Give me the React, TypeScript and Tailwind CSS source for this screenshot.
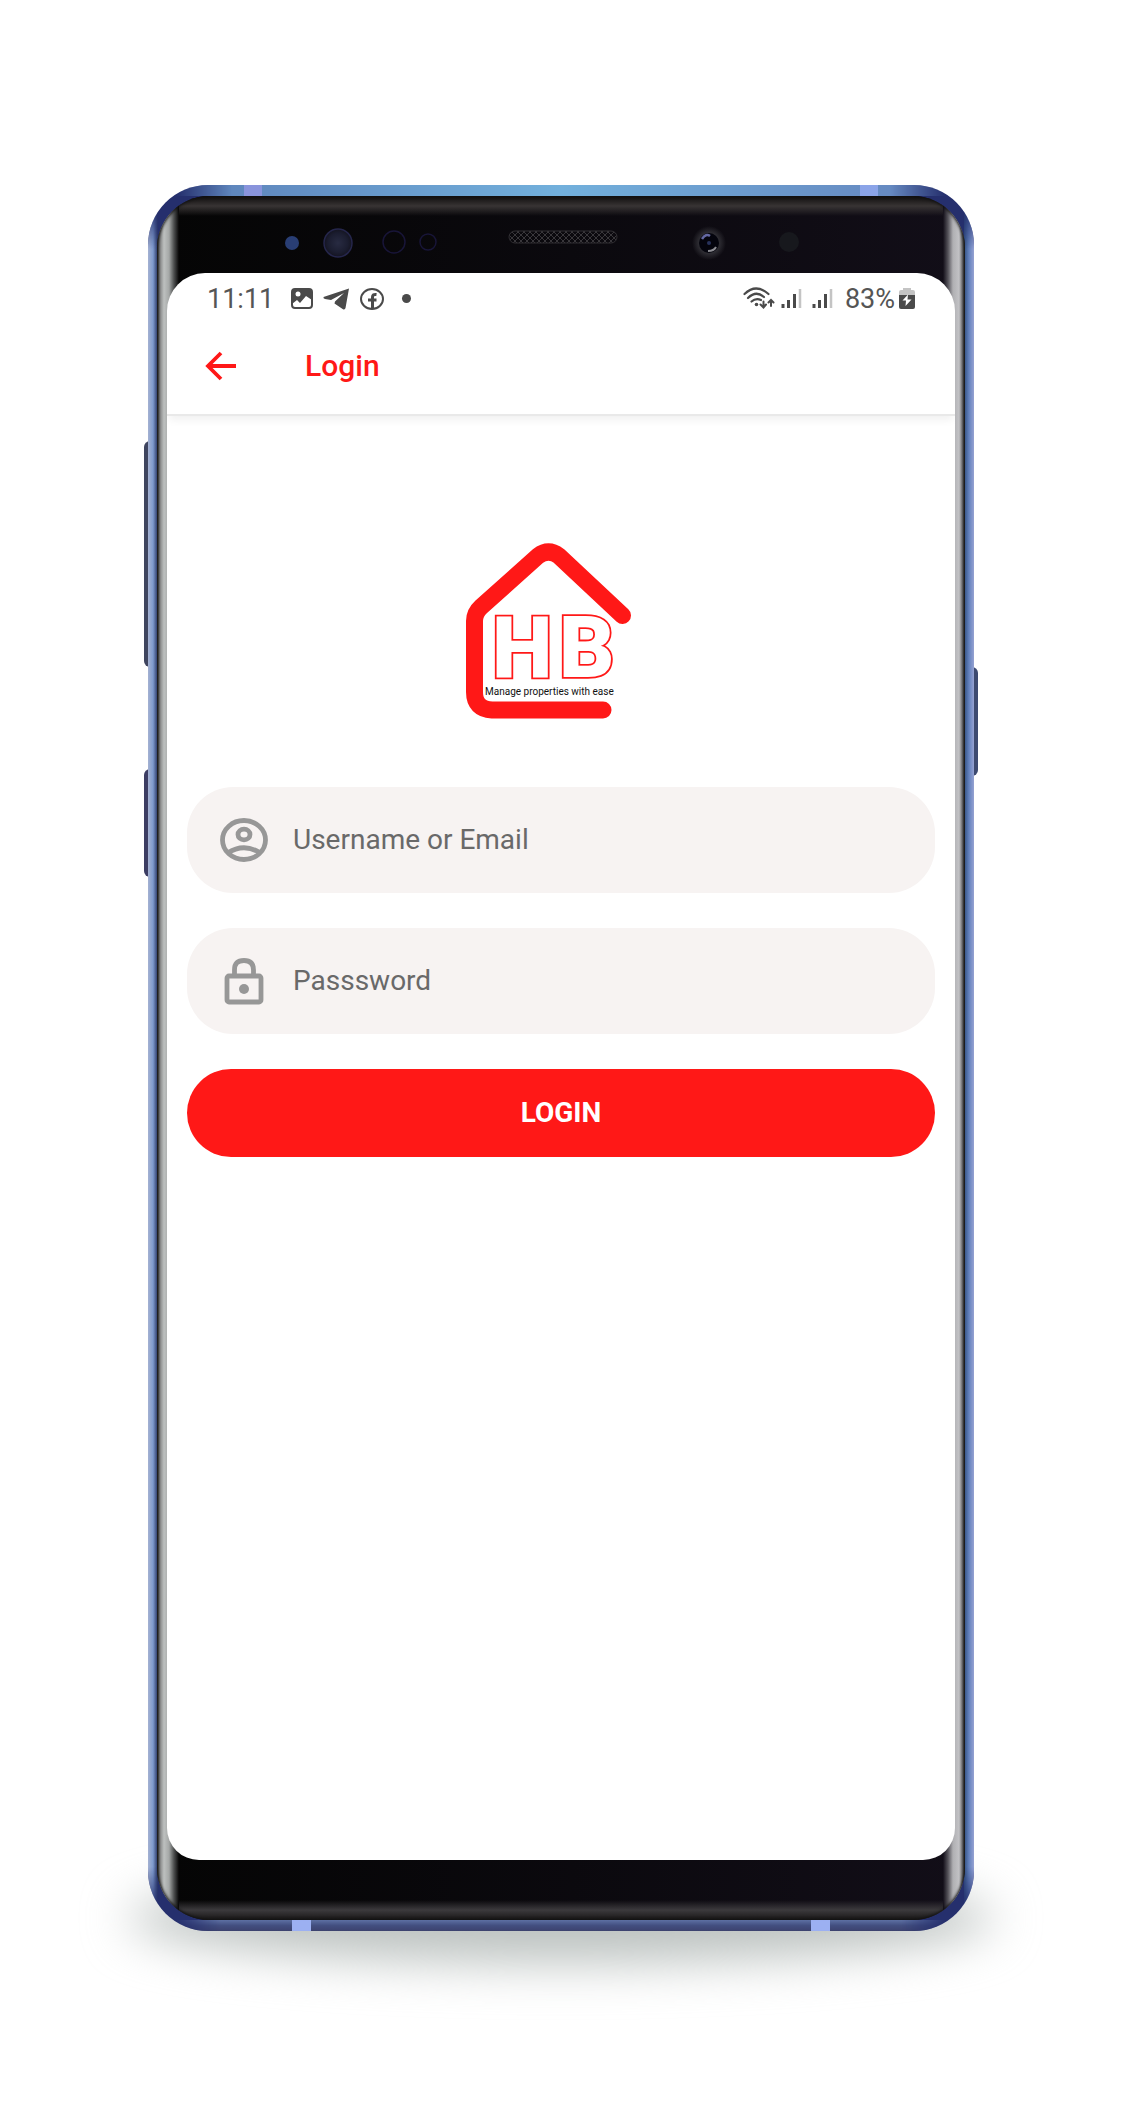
import React from "react";

function Sensors() {
  return (
    <svg className="mx-auto block" width="787" height="77" viewBox="10 0 787 77" aria-hidden="true">
      <defs>
        <pattern id="mesh" width="6" height="6" patternUnits="userSpaceOnUse">
          <path d="M0 0L6 6M6 0L0 6" stroke="#39373b" strokeWidth="1" />
        </pattern>
        <radialGradient id="lens">
          <stop offset="0" stopColor="#282b42" />
          <stop offset="0.7" stopColor="#1b1d30" />
          <stop offset="1" stopColor="#141420" />
        </radialGradient>
        <radialGradient id="glow">
          <stop offset="0.6" stopColor="#2e2d33" />
          <stop offset="1" stopColor="#2e2d33" stopOpacity="0" />
        </radialGradient>
      </defs>
      <circle cx="134" cy="47" r="7" fill="#293e74" />
      <circle cx="180" cy="47" r="14" fill="url(#lens)" stroke="#25264b" strokeWidth="1.5" />
      <circle cx="236" cy="46" r="11" fill="none" stroke="#181538" strokeWidth="1.5" />
      <circle cx="270" cy="46" r="8" fill="none" stroke="#181538" strokeWidth="1.5" />
      <rect x="351" y="35" width="108" height="12" rx="6" fill="url(#mesh)" stroke="#302e32" />
      <circle cx="551" cy="47" r="17" fill="url(#glow)" />
      <circle cx="551" cy="47" r="10" fill="#04040d" />
      <path d="M544 43Q548 37 552 40" fill="none" stroke="#6468a2" strokeWidth="2.500" />
      <path d="M550 55Q556 55 558 51" fill="none" stroke="#8d8d93" strokeWidth="2" />
      <circle cx="551" cy="47" r="2" fill="#27325c" />
      <circle cx="631" cy="46" r="10" fill="#17181d" />
    </svg>
  );
}

function PhotoIcon() {
  return (
    <svg width="22" height="22" viewBox="0 0 22 22" aria-hidden="true">
      <rect x="1" y="1" width="20" height="19" rx="3" fill="none" stroke="#4a4a4a" strokeWidth="2" />
      <path d="M1 1H21V12L15 8L9 15L6 12L1 16Z" fill="#4a4a4a" />
      <circle cx="7" cy="6" r="2.5" fill="#fff" />
    </svg>
  );
}

function PlaneIcon() {
  return (
    <svg width="27" height="22" viewBox="0 0 27 22" aria-hidden="true">
      <path d="M26 0.5L0.5 9Q0 10.500 2 11L8 12L21 5L12 13.500L11.500 15.500L20 21.200Q22 22 22.500 20Z" fill="#4a4a4a" />
    </svg>
  );
}

function FacebookIcon() {
  return (
    <svg width="24" height="22" viewBox="0 0 24 22" aria-hidden="true">
      <ellipse cx="12" cy="11" rx="11" ry="10" fill="none" stroke="#4a4a4a" strokeWidth="2" />
      <path d="M12.500 21V9Q12.500 6 16.500 6.500M8 12H16.500" fill="none" stroke="#4a4a4a" strokeWidth="3" />
    </svg>
  );
}

function WifiIcon() {
  return (
    <svg width="32" height="23" viewBox="0 0 32 23" aria-hidden="true">
      <g fill="none" stroke="#4a4a4a" strokeWidth="2.2" strokeLinecap="round">
        <path d="M1.500 7Q13 -4 25.500 7" />
        <path d="M5 11Q13 3 21 10" />
        <path d="M8.500 14.500Q13 10.500 18 13" />
        <path d="M20.500 14.500V20M17.500 17.500L20.500 20.500L23 17.500M28 19V13M25.500 15.500L28 13L30.500 15.500" strokeWidth="2" />
      </g>
      <circle cx="13.500" cy="17.500" r="1.800" fill="#4a4a4a" />
    </svg>
  );
}

function SignalIcon() {
  return (
    <svg width="21" height="21" viewBox="0 0 21 21" aria-hidden="true">
      <path d="M2 16V20M7.500 12V20M13.500 6V20" stroke="#4a4a4a" strokeWidth="3" />
      <path d="M19 1V20" stroke="#c4c4c4" strokeWidth="2.5" />
    </svg>
  );
}

function BatteryIcon() {
  return (
    <svg width="16" height="23" viewBox="0 0 16 23" aria-hidden="true">
      <path d="M4 1H12V3H14Q16 3 16 5V8H0V5Q0 3 2 3H4Z" fill="#c4c4c4" />
      <path d="M0 8H16V20Q16 22 14 22H2Q0 22 0 20Z" fill="#4a4a4a" />
      <path d="M9 7.500L3.500 13.500H7L6.500 19L12.500 12.500H8.500Z" fill="#fff" />
    </svg>
  );
}

function StatusBar() {
  return (
    <div className="flex h-[51px] items-center justify-between px-10 text-[27px] leading-8 text-[#555]">
      <div className="flex items-center">
        <span className="w-[84px]">11:11</span>
        <span className="flex items-center gap-2.5">
          <PhotoIcon />
          <PlaneIcon />
          <FacebookIcon />
          <span className="ml-2 size-[9px] rounded-full bg-[#4a4a4a]" />
        </span>
      </div>
      <div className="flex items-center">
        <WifiIcon />
        <span className="ml-1.5 flex gap-2.5">
          <SignalIcon />
          <SignalIcon />
        </span>
        <span className="mr-1 ml-3">83%</span>
        <BatteryIcon />
      </div>
    </div>
  );
}

function Logo() {
  return (
    <svg className="mx-auto mt-[114px] block" width="200" height="200" viewBox="0 0 200 200" role="img" aria-label="HB">
      <path
        d="M142 180H31Q13.500 179 13.500 162V91Q13.500 83 20 77L77 26Q87.500 18 98 26L161.500 85.500"
        fill="none"
        stroke="#ff1817"
        strokeWidth="17"
        strokeLinecap="round"
      />
      <g
        className="[paint-order:stroke]"
        fill="#fff"
        stroke="#ff1817"
        strokeWidth="3.600"
        fontFamily="Roboto"
        fontWeight="900"
        fontSize="86"
      >
        <text x="31" y="147">H</text>
        <text x="98" y="147">B</text>
      </g>
      <text x="24" y="165" fill="#111" fontFamily="Roboto" fontSize="10">
        Manage properties with ease
      </text>
    </svg>
  );
}

function UserIcon() {
  return (
    <svg width="48" height="44" viewBox="0 0 48 44" aria-hidden="true">
      <g fill="none" stroke="#979797" strokeWidth="4.800">
        <ellipse cx="24" cy="22" rx="21.500" ry="19.500" />
        <ellipse cx="24" cy="16.500" rx="6" ry="5.300" />
        <path d="M7.500 35Q24 24.500 40.500 35" />
      </g>
    </svg>
  );
}

function LockIcon() {
  return (
    <svg width="48" height="48" viewBox="0 0 48 48" aria-hidden="true">
      <rect x="7" y="19" width="34" height="26" rx="2" fill="none" stroke="#979797" strokeWidth="4.800" />
      <path d="M14.500 19V13Q14.500 3.500 24 3.500Q33.500 3.500 33.500 13V19" fill="none" stroke="#979797" strokeWidth="4.800" />
      <circle cx="24" cy="32" r="5" fill="#979797" />
    </svg>
  );
}

function Field({ label, type, icon }: { label: string; type: string; icon: React.ReactNode }) {
  return (
    <label className="flex h-[106px] items-center gap-[25px] rounded-[46px] bg-[#f7f3f2] px-[33px]">
      {icon}
      <input
        type={type}
        aria-label={label}
        placeholder={label}
        className="min-w-0 flex-1 bg-transparent text-[28px] leading-9 text-[#333] outline-none placeholder:text-[#696969] placeholder:opacity-100"
      />
    </label>
  );
}

function Screen() {
  return (
    <div className="overflow-hidden rounded-t-[38px] rounded-b-[32px] bg-white">
      <StatusBar />
      <header className="flex items-center border-b-2 border-[#e9e9e9] px-[38px] pt-[17px] pb-[23px] shadow-[0_6px_8px_-2px_rgba(0,0,0,0.06)]">
        <button type="button" aria-label="Back" className="w-[100px]">
          <svg width="32" height="30" viewBox="0 0 32 30" aria-hidden="true">
            <path d="M31 15H3M16 2L3 15L16 28" fill="none" stroke="#ff1817" strokeWidth="3.800" />
          </svg>
        </button>
        <h1 className="text-[30px] leading-[50px] font-medium text-[#ff1817]">Login</h1>
      </header>
      <Logo />
      <form className="mt-[57px] flex flex-col gap-[35px] px-5 pb-[703px]" onSubmit={(e) => e.preventDefault()}>
        <Field label="Username or Email" type="text" icon={<UserIcon />} />
        <Field label="Passsword" type="password" icon={<LockIcon />} />
        <button type="submit" className="h-[88px] rounded-full bg-[#ff1817] text-[28px] font-bold text-white">
          LOGIN
        </button>
      </form>
    </div>
  );
}

export default function App() {
  return (
    <main className="overflow-hidden bg-white pt-[185px] pr-[151px] pb-[191px] pl-[148px] font-[Roboto,sans-serif]">
      <div className="relative isolate">
        <div className="absolute -inset-x-5 -bottom-[32px] -z-10 h-[90px] rounded-[50%] bg-[#bcc2c0] blur-[24px]" />
        <div className="absolute top-[256px] -left-1 -z-10 h-[226px] w-3 rounded-l-md bg-[#3f455f]" />
        <div className="absolute top-[584px] -left-1 -z-10 h-[108px] w-3 rounded-l-md bg-[#3c3d63]" />
        <div className="absolute top-[482px] -right-1 -z-10 h-[109px] w-3 rounded-r-md bg-[#3d4a70]" />

        <div className="relative overflow-hidden rounded-[60px] bg-[#252f6d] px-[9px] py-[11px]">
          <div className="absolute inset-y-5 left-0 w-[10px] bg-linear-to-r from-[#a5b2d2] via-[#7f9bce] to-[#263260] [mask-image:linear-gradient(transparent,#000_44px,#000_calc(100%_-_44px),transparent)]" />
          <div className="absolute inset-y-5 right-0 w-[10px] bg-linear-to-l from-[#96a2d2] via-[#6482be] to-[#304f80] [mask-image:linear-gradient(transparent,#000_44px,#000_calc(100%_-_44px),transparent)]" />
          <div className="absolute inset-x-7 top-0 h-[11px] bg-linear-to-r from-[#5c80b8] via-[#72b0dc] to-[#6484bd] [mask-image:linear-gradient(to_right,transparent,#000_56px,#000_calc(100%_-_56px),transparent)]" />
          <div className="absolute inset-x-7 bottom-0 h-[11px] bg-linear-to-b from-[#5d70a3] via-[#434f80] to-[#3c426e] [mask-image:linear-gradient(to_right,transparent,#000_44px,#000_calc(100%_-_44px),transparent)]" />
          <div className="absolute inset-x-24 top-0 flex h-[11px] justify-between">
            <span className="w-[18px] bg-[#8994dc]" />
            <span className="w-[18px] bg-[#8ba4e8]" />
          </div>
          <div className="absolute inset-x-36 bottom-0 flex h-[11px] justify-between">
            <span className="w-[19px] bg-[#9cb0f2]" />
            <span className="w-[19px] bg-[#9cb0f2]" />
          </div>

          <div className="relative overflow-hidden rounded-[52px] bg-linear-to-r from-[#050505] to-[#120e18] px-[10px] pb-[60px]">
            <div className="absolute inset-x-5 top-0 h-5 bg-linear-to-b from-[#100e0e] via-[#383434] to-transparent" />
            <div className="absolute inset-x-5 bottom-0 h-5 bg-linear-to-t from-[#181616] via-[#3c3a3d] to-transparent" />
            <div className="absolute inset-y-0 left-0 w-[22px] bg-[linear-gradient(to_right,#2a2a2c,#858686_3px,#bdc0bf_7px,#a5a8a7_12px,#4c4e4e_17px,#050505_22px)]" />
            <div className="absolute inset-y-0 right-0 w-[22px] bg-[linear-gradient(to_left,#222424,#77777a_3px,#c2c2c5_6px,#b0b0b3_12px,#55535a_17px,#120e18_22px)]" />
            <div className="absolute inset-0 rounded-[52px] shadow-[inset_0_0_3px_1px_#111]" />
            <div className="relative">
              <Sensors />
              <Screen />
            </div>
          </div>
        </div>
      </div>
    </main>
  );
}
